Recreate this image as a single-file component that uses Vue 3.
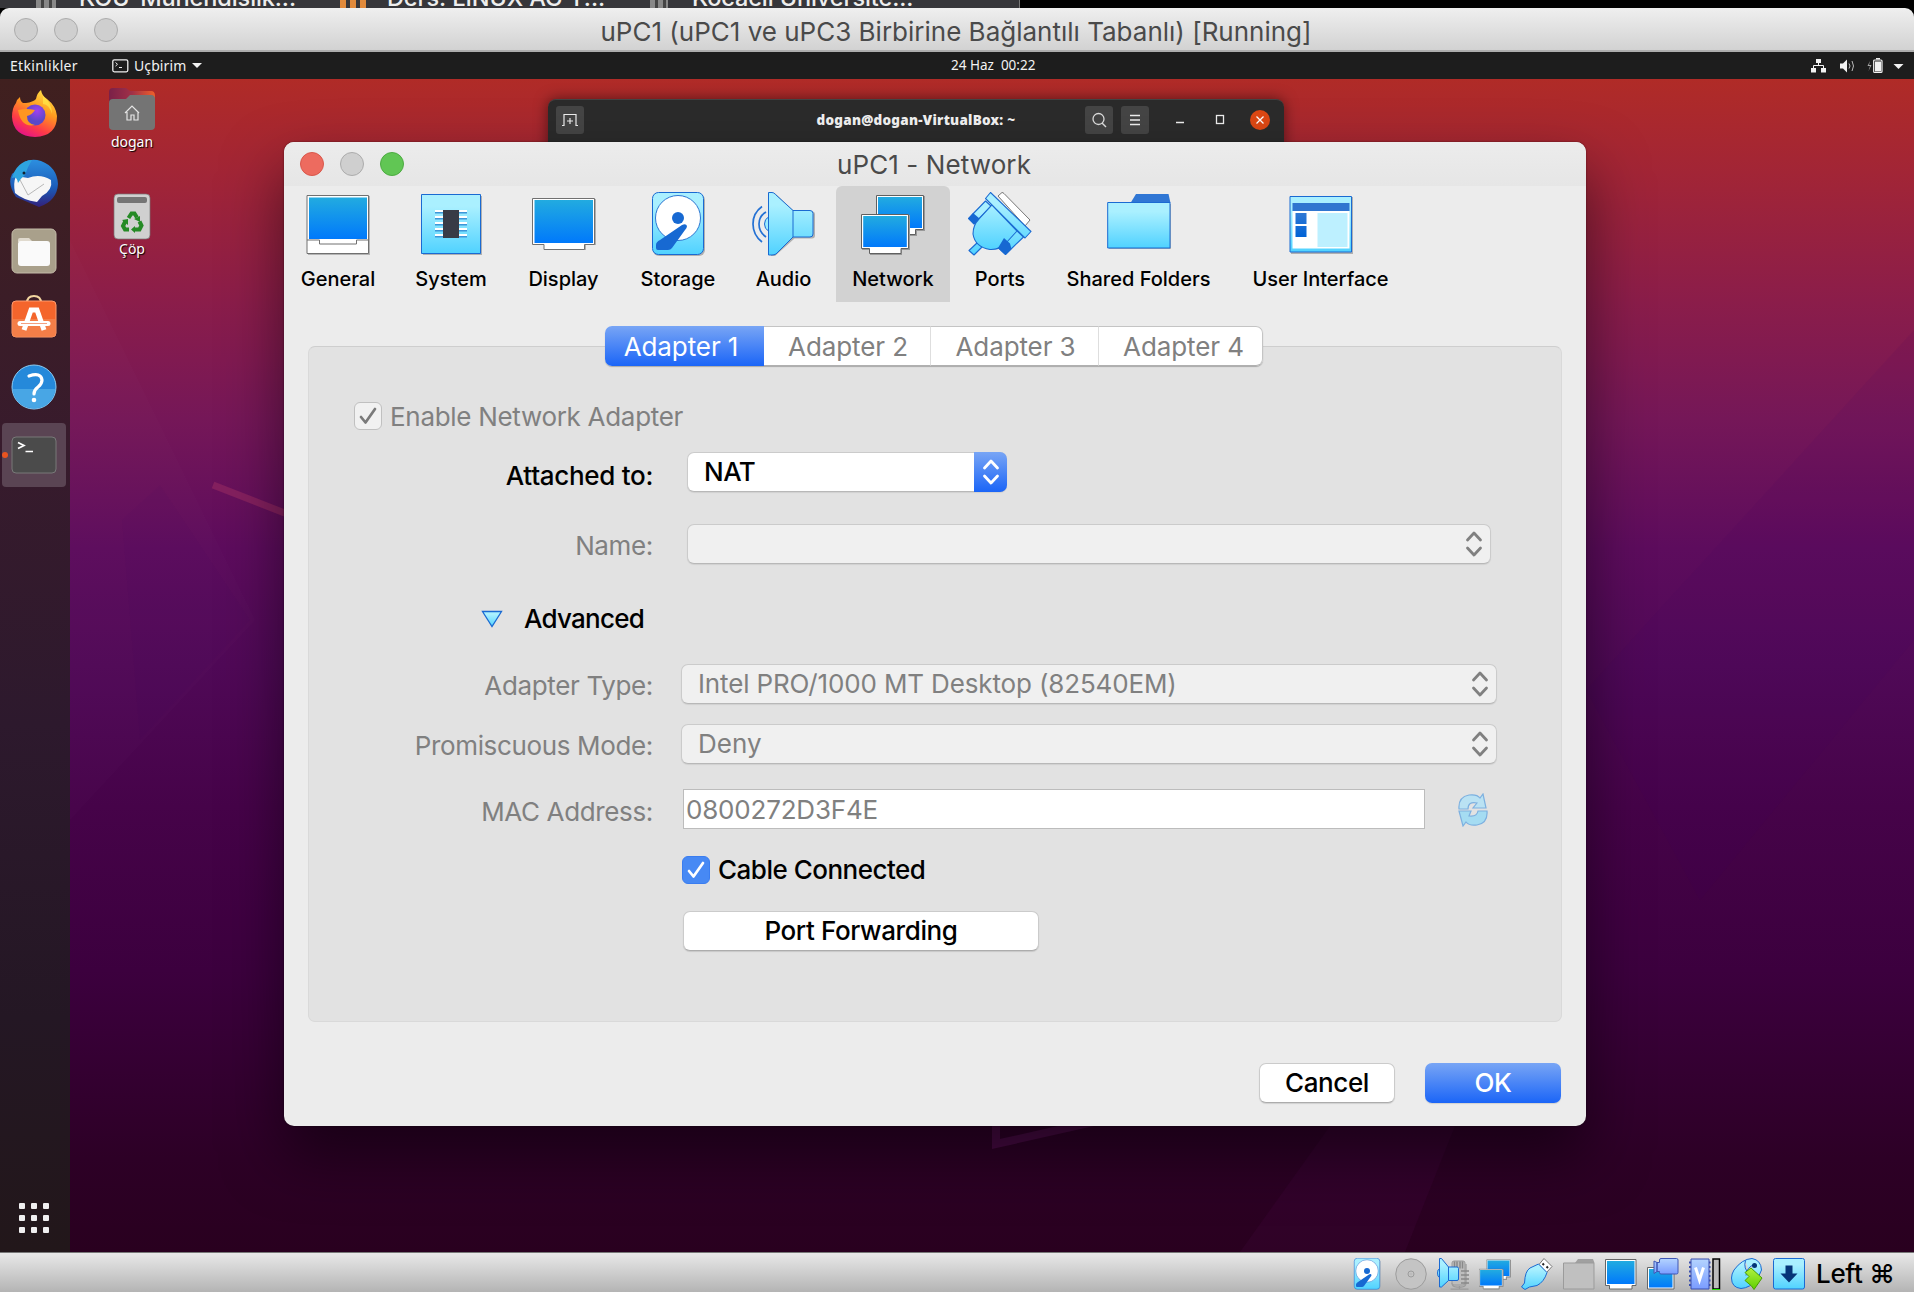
<script setup>
const tools = [
  { id: 'general', label: 'General', w: 108 },
  { id: 'system', label: 'System', w: 102 },
  { id: 'display', label: 'Display', w: 107 },
  { id: 'storage', label: 'Storage', w: 106 },
  { id: 'audio', label: 'Audio', w: 89 },
  { id: 'network', label: 'Network', w: 114 },
  { id: 'ports', label: 'Ports', w: 84 },
  { id: 'folder', label: 'Shared Folders', w: 177 },
  { id: 'ui', label: 'User Interface', w: 171 },
]
const tabs = ['Adapter 1', 'Adapter 2', 'Adapter 3', 'Adapter 4']
const status = ['storage', 'cd', 'audiomic', 'network', 'usb', 'folder-off', 'screen', 'record', 'cpu', 'mouse', 'arrow']
</script>

<template>
  <div class="screen">
    <svg class="defs" width="0" height="0" aria-hidden="true">
      <defs>
        <linearGradient id="cy" x2="0" y2="1"><stop offset=".2" stop-color="#aaf0ff" /><stop offset="1" stop-color="#50d2ff" /></linearGradient>
        <linearGradient id="bl" x2="0" y2="1"><stop stop-color="#22abe0" /><stop offset="1" stop-color="#0079fb" /></linearGradient>
        <linearGradient id="dk" x2="0" y2="1"><stop stop-color="#2f78d4" /><stop offset="1" stop-color="#0062d6" /></linearGradient>
        <linearGradient id="vi" x2="0" y2="1"><stop stop-color="#b4d4ff" /><stop offset="1" stop-color="#7a9cff" /></linearGradient>
        <linearGradient id="gn" x2="0" y2="1"><stop stop-color="#b0f040" /><stop offset="1" stop-color="#5fd000" /></linearGradient>
        <linearGradient id="ff" x1=".8" y1="0" x2=".3" y2="1"><stop stop-color="#ffe84a" /><stop offset=".4" stop-color="#ff9a1f" /><stop offset=".75" stop-color="#ff3b47" /><stop offset="1" stop-color="#e3128a" /></linearGradient>
        <radialGradient id="fp" cx=".6" cy=".3"><stop stop-color="#a040f0" /><stop offset="1" stop-color="#5b48c8" /></radialGradient>
        <linearGradient id="tb" x2="0" y2="1"><stop stop-color="#2c8fe0" /><stop offset=".6" stop-color="#1b5bb8" /><stop offset="1" stop-color="#33207a" /></linearGradient>
        <linearGradient id="fo" x2="1" y2="0"><stop stop-color="#7a2048" /><stop offset=".5" stop-color="#a03048" /><stop offset="1" stop-color="#f0602a" /></linearGradient>
      </defs>
      <symbol id="general" viewBox="0 0 64 64">
        <path d="M2 4h62v59H2z" fill="#b4b4b4" /><path d="M1 3.500h61.500v58H1z" fill="#fff" stroke="#707070" />
        <path d="M3 5.500h58v41.500H3z" fill="url(#bl)" /><path d="M1 48h12.500v4h37v-4H62" fill="none" stroke="#707070" />
      </symbol>
      <symbol id="system" viewBox="0 0 64 64">
        <path d="M4 4h59v59H4z" fill="#b0b0b0" /><path d="M2.500 2.500h59v59h-59z" fill="url(#cy)" stroke="#1a6ad2" />
        <g fill="#3d96d8"><path d="M16 20h32v1.500H16zM16 26h32v1.500H16zM16 32h32v1.500H16zM16 38h32v1.500H16zM16 44h32v1.500H16z" /></g>
        <path d="M16 18h32v2H16zM16 24h32v2H16zM16 30h32v2H16zM16 36h32v2H16zM16 42h32v2H16z" fill="#fff" /><path d="M24 18h16v28H24z" fill="#383b46" />
      </symbol>
      <symbol id="display" viewBox="0 0 64 64">
        <path d="M1 7h63v46H54v5H14v-5H1z" fill="#b0b0b0" /><path d="M.5 6.500h62V52.500h-10v5H12v-5H.5z" fill="#fff" stroke="#707070" /><path d="M2.500 8h58.500v43H2.500z" fill="url(#bl)" />
      </symbol>
      <symbol id="storage" viewBox="0 0 64 64">
        <rect x="7" y="2" width="52" height="62" rx="6" fill="#b0b0b0" /><rect x="6.500" y=".5" width="51" height="62" rx="6" fill="url(#cy)" stroke="#1a6ad2" />
        <circle cx="32" cy="26" r="22.500" fill="#fff" stroke="#2e78d2" /><circle cx="32" cy="26" r="6" fill="#1769d2" />
        <path d="M10 53q0-3 4-5L36 33q4-2 5 1q0 2-2 4L26 56q-1.500 2-4 2H12q-2 0-2-2z" fill="#1769d2" />
      </symbol>
      <symbol id="cone" viewBox="0 0 64 64">
        <path d="M18 .8l4 0 L41.500 19H59q3 0 3 3V43q0 3-3 3H41.500L22 63.500h-4z" transform="translate(1 .5)" fill="#b0b0b0" />
        <path d="M16.500 .5H20q2 0 3.500 2L41 18.500H58q3 0 3 3V42q0 3-3 3H41L24 62q-2 1-4 1h-3.500zM41 18.500V45" fill="url(#cy)" stroke="#1a6ad2" />
      </symbol>
      <symbol id="audio" viewBox="0 0 64 64">
        <use href="#cone" /><path d="M16.500 25q-4 2-4 7t4 7z" fill="#9cecff" stroke="#1a6ad2" />
        <path d="M14 20Q7 24 7 32t7 13M10 14.500Q1 21 1 32t9 18" fill="none" stroke="#2371d4" stroke-width="1.700" />
      </symbol>
      <symbol id="network" viewBox="0 0 64 64">
        <path d="M16 4h48v35h-8v5H16z" fill="#999" /><path d="M15.500 3.500h47V37.500h-8v5h-39z" fill="#fff" stroke="#606060" /><path d="M17 5h44v31H17z" fill="url(#bl)" />
        <path d="M1 23h48v35h-8v5H9v-5H1z" fill="#999" /><path d="M.5 22.500h47V56.500H40v5H8.500v-5h-8z" fill="#fff" stroke="#606060" /><path d="M2.200 24h43.600v31H2.200z" fill="url(#bl)" />
      </symbol>
      <symbol id="ports" viewBox="0 0 64 64">
        <path d="M30 4l4-3.500q1 0 2 1L62 28l-5 6z" fill="#fff" stroke="#777" />
        <g fill="url(#cy)" stroke="#1a6ad2" stroke-width="1.100" stroke-linejoin="round">
          <path d="M17.500 9L.5 26.500l5.500 5.500L23 14zM55.500 45L37.500 62.500l-7-6.500L48 38zM9.500 50.500L1 58.500l5 4.500L14 55z" />
          <path d="M24 13L49 39 38 51Q31 58 22 57.500 7 55 5 42 5 33 11 27zM22.500 .5l-5 6L57 46l6-6.500z" />
        </g>
        <path d="M5 21L.5 26.500l5.500 5.500 5.500-5.500zM42 51.500l-6-5.500-6 10 7.500 7 6-6z" fill="#1668d2" />
      </symbol>
      <symbol id="folder" viewBox="0 0 64 64">
        <path d="M23.500 11L29 2h32.500L63.500 11z" fill="#2f76d4" /><path d="M2 12h62v45H2z" fill="#b0b0b0" /><path d="M.7 10.500h62.300V56H.7z" fill="url(#cy)" stroke="#1a6ad2" />
      </symbol>
      <symbol id="ui" viewBox="0 0 64 64">
        <path d="M2 5h62v57H2z" fill="#b0b0b0" /><path d="M1 4.500h61.500v55.500H1z" fill="url(#cy)" stroke="#1a6ad2" /><path d="M3.500 19h57v37.500h-57z" fill="#fff" />
        <path d="M3.500 11h57v8h-57z" fill="#3076d0" /><path d="M6.500 21h11v11h-11zM6.500 34h11v11h-11z" fill="url(#dk)" /><path d="M28.500 21h30v34h-30z" fill="#bdf0ff" />
      </symbol>
      <symbol id="cd" viewBox="0 0 64 64"><g fill="#c4c4c4" stroke="#9c9c9c" stroke-width="2"><circle cx="32" cy="32" r="30.500" /><circle cx="32" cy="32" r="6" /></g><circle cx="32" cy="32" r="2.500" fill="#bbb" /></symbol>
      <symbol id="audiomic" viewBox="0 0 64 64">
        <g fill="none" stroke="#9a9a9a" stroke-width="2.500"><path d="M30 50q0 8 10 8h8q10 0 10-8V12M27 62h36M45 56v6" /></g>
        <rect x="30" y="6" width="26" height="48" rx="4" fill="#bdbdbd" stroke="#999" stroke-width="2" /><path d="M35 7v14M40 7v14M46 7v14M51 7v14M48 26h16M48 34h16M48 42h16M48 50h16" stroke="#888" stroke-width="3" />
        <path d="M5 1h4l14 17h17q3 0 3 3v21q0 3-3 3H23L9 58H5zM23 18v27M5 22q-4 0-4 8t4 9" fill="url(#cy)" stroke="#1a6ad2" stroke-width="2" />
      </symbol>
      <symbol id="usb" viewBox="0 0 64 64">
        <path d="M46 1L62 17 51 29 36 13z" fill="#fff" stroke="#777" stroke-width="2" /><path d="M43 11l3 3M51 17l3 3" stroke="#222" stroke-width="4" />
        <path d="M35 12L52 29Q46 48 32 55L17 58 8 63 1 58 7 50Q8 26 18 20z" fill="url(#cy)" stroke="#1a6ad2" stroke-width="2" />
      </symbol>
      <symbol id="folder-off" viewBox="0 0 64 64"><path d="M24 10l6-8h30l3 8z" fill="#a0a0a0" /><path d="M1 10h61v52H1z" fill="#c0c0c0" stroke="#9b9b9b" stroke-width="2" /></symbol>
      <symbol id="screen" viewBox="0 0 64 64"><path d="M1 3h61v52h-8v7H9v-7H1z" fill="#fff" stroke="#666" stroke-width="2" /><path d="M4 6h55v46H4z" fill="url(#bl)" /></symbol>
      <symbol id="record" viewBox="0 0 64 64"><path d="M1 19h53v43H1z" fill="#fff" stroke="#666" stroke-width="2" /><path d="M4 22h47v37H4z" fill="url(#bl)" /><path d="M14 6l6 3v18l-6 4zM20 9h5V4q0-3 3-3h31q3 0 3 3v25q0 3-3 3H28q-3 0-3-3v-2h-5z" fill="url(#vi)" stroke="#3f57b4" stroke-width="2" /></symbol>
      <symbol id="cpu" viewBox="0 0 64 64">
        <path d="M0 9h43M0 18h43M0 27h43M0 36h43M0 45h43M0 54h43" stroke="#3a4fae" stroke-width="4" /><path d="M4 2h36v60H4z" fill="url(#vi)" stroke="#3a4fae" stroke-width="2" />
        <path d="M13 19L21 44 29 19" fill="none" stroke="#fff" stroke-width="6" /><path d="M48 2h13v60H48z" fill="#bbb" stroke="#000" stroke-width="3" /><path d="M46 62h16v2H46z" fill="#1fe000" />
      </symbol>
      <symbol id="mouse" viewBox="0 0 64 64"><path d="M6 24Q22 2 42 1 60 4 61 24L53 42Q38 60 20 61 1 59 1 40 1 32 6 24zM29 5q-5 16 8 27M47 13q-16 5-17 22" fill="url(#cy)" stroke="#1a6ad2" stroke-width="2" /><circle cx="47" cy="15" r="5" fill="#033477" /><path d="M40 20L62 40 46 63 41 56 28 45 36 37 28 29z" fill="url(#gn)" stroke="#499f00" stroke-width="2" /></symbol>
      <symbol id="arrow" viewBox="0 0 64 64"><rect x="1" y="1" width="62" height="61" rx="4" fill="url(#cy)" stroke="#1a6ad2" stroke-width="2" /><path d="M25 15h14v16h10L32 49 15 31h10z" fill="#063478" /></symbol>
    </svg>

    <div class="strip">
      <div class="strip-dark">
        <span class="sq g" /><b class="s1">KOÜ-Mühendislik...</b>
        <span class="sq o" /><b class="s2">Ders: LİNUX AG Y...</b>
        <span class="sq g" /><b class="s3">Kocaeli Üniversite...</b><b class="s4">»</b>
      </div>
    </div>
    <header class="vmbar">
      <span class="lights"><i /><i /><i /></span>
      <span class="vmtitle">uPC1 (uPC1 ve uPC3 Birbirine Bağlantılı Tabanlı) [Running]</span>
    </header>
    <div class="gnome">
      <span class="act">Etkinlikler</span>
      <svg class="ticon" width="17" height="14" viewBox="0 0 17 14"><rect x=".8" y=".8" width="15" height="12" rx="1.500" fill="none" stroke="#eee" stroke-width="1.300" /><path d="M3.500 3.500l2 1.800-2 1.800M7 8.500h3" fill="none" stroke="#eee" /></svg>
      <span class="app">Uçbirim</span><span class="caret" />
      <span class="clock">24 Haz&nbsp; 00:22</span>
      <svg class="tray" width="94" height="16" viewBox="0 0 94 16">
        <g fill="#f2f2f2"><path d="M5 1h5v4H5zM0 10h5v4.500H0zM10 10h5v4.500h-5z" /><path d="M2.500 10V7.500h10V10M7.500 5v2.500" fill="none" stroke="#f2f2f2" />
          <path d="M29 5.500h3l4-4v13l-4-4h-3z" /><path d="M38 5.500q2 2.500 0 5M41 3q3 5 0 10" fill="none" stroke="#bbb" /><path d="M59 3l-2.500 5H59l-1.500 5 3-6H58z" fill="#aaa" /><path d="M65 0h4v1.500h-4zM64 3.500h6v10h-6z" /><rect x="62.700" y="2" width="8.300" height="12.500" rx="1" fill="none" stroke="#f2f2f2" stroke-width="1.200" /><path d="M82.500 6h10l-5 5z" /></g>
      </svg>
    </div>

    <main class="desktop">
      <svg class="wall" viewBox="0 79 1914 1173" preserveAspectRatio="none">
        <path d="M70 240L255 620 70 820z" fill="#fff" opacity=".012" /><path d="M122 520L160 485 250 620 140 740z" fill="#30006a" opacity=".04" />
        <path d="M1586 690L1914 330V640L1700 900z" fill="#40006a" opacity=".08" /><path d="M1240 1252L1330 1126h125l-50 126z" fill="#70106a" opacity=".1" />
        <path d="M213 485L300 519" stroke="#84205f" stroke-width="7" /><path d="M996 1115v29l115-26" fill="none" stroke="#480a44" stroke-width="8" />
      </svg>
      <aside class="dock">
        <svg class="d ff" width="48" height="48" viewBox="0 0 48 48"><path d="M6 13q1-4 4-6 0 4 3 6h3q7-1 10-4 1-6 5-9 1 6 6 9 9 7 10 17 0 20-22 21Q3 46 2 27 2 18 6 13z" fill="url(#ff)" /><circle cx="25" cy="25" r="10.500" fill="url(#fp)" /><path d="M8 20q8-2 17 0-3 5-8 6 0 8 8 9-14 3-17-15z" fill="#ff9620" /><path d="M33 6q9 7 9 18-3-10-9-10z" fill="#fff04d" opacity=".6" /></svg>
        <svg class="d tb" width="50" height="50" viewBox="0 0 50 50"><path d="M15 4Q23 0 32 3 48 9 49 26 48 43 30 49L7 39Q-2 26 3 16q4-4 8-5z" fill="url(#tb)" /><path d="M19 20q12-5 23 2 2 10-9 16l-5 6Q14 42 6 35 4 25 7 18z" fill="#f6f6f6" /><path d="M10 20l9 17L35 26" fill="none" stroke="#b8b8b8" /><path d="M3 20Q8 3 23 2q-4 6-7 15-4 3-7 8-1-7-6-5z" fill="#2ea4df" /><circle cx="15" cy="15" r="1.500" fill="#123" /></svg>
        <svg class="d fi" width="46" height="46" viewBox="0 0 46 46"><rect x="1" y="1" width="44" height="44" rx="5" fill="#a9a08b" stroke="#c3bba8" /><path d="M7 12q0-2 2-2h9l4 4h-15z" fill="#e0dace" /><rect x="7" y="13" width="32" height="25" rx="3" fill="#fafafa" /></svg>
        <svg class="d so" width="46" height="44" viewBox="0 0 46 44"><path d="M16 9q0-7 7-7t7 7" fill="none" stroke="#f3d6a0" stroke-width="2" /><rect x="1" y="7" width="44" height="36" rx="4" fill="#f4652c" stroke="#ff9c6e" /><path d="M1 25h44v14q0 4-4 4H5q-4 0-4-4z" fill="#f48450" opacity=".8" /><path d="M13 36l7-20h6l7 20" fill="none" stroke="#fff" stroke-width="5" /><path d="M9 29.500h28" stroke="#fff" stroke-width="5" stroke-linecap="round" /><path d="M10 29.500h26" stroke="#f3a080" /></svg>
        <svg class="d he" width="46" height="46" viewBox="0 0 46 46"><circle cx="23" cy="23" r="22" fill="#2589da" stroke="#8ccdf4" /><path d="M1.500 25h43Q41 44 23 44.500 4 43 1.500 25z" fill="#48a6e5" /><path d="M18 12q12-4 13 4 0 4-4 7-4 3-4 7" fill="none" stroke="#fff" stroke-width="3.200" stroke-linecap="round" /><circle cx="23" cy="36" r="2.300" fill="#fff" /></svg>
        <div class="active"><i /><svg width="46" height="38" viewBox="0 0 46 38"><rect x="1" y="1" width="44" height="36" rx="4" fill="#4b4b4b" stroke="#787878" /><path d="M7 6.500l6 3-6 3M14.500 15.500h7.500" fill="none" stroke="#fff" stroke-width="1.700" /></svg></div>
        <div class="apps"><i v-for="n in 9" :key="n" /></div>
      </aside>
      <div class="shortcuts">
        <svg width="46" height="43" viewBox="0 0 46 43"><path d="M0 8V4q0-4 4-4h13l4 3h21q4 0 4 5v12H0z" fill="url(#fo)" /><path d="M0 15q0-4 4-4h13l4-4h21q4 0 4 4v27q0 4-4 4H4q-4 0-4-4z" fill="#747474" /><path d="M16 25l7-7 7 7M18 24v8h4v-5h3v5h4v-8" fill="none" stroke="#e5e5e5" stroke-width="1.200" /></svg>
        <span>dogan</span>
        <svg class="bin" width="38" height="47" viewBox="0 0 38 47"><rect x="1" y="1" width="36" height="45" rx="4" fill="#d0d0d0" stroke="#777" stroke-width=".7" /><rect x="4" y="4" width="30" height="6" rx="2" fill="#757575" /><g fill="none" stroke="#258a25" stroke-width="4"><path d="M15.500 25l3-4.500h3l2.500 4M26.500 28.500l2 4-2 4h-4.500M16 36.500h-4l-2-3.500 2.500-5" /></g><path d="M21 26l6-3v6zM22 33v7l-4-3.500zM9 27l6-1 0 6z" fill="#258a25" /></svg>
        <span>Çöp</span>
      </div>
      <section class="term">
        <span class="tbtn"><svg width="16" height="16" viewBox="0 0 16 16"><path d="M0 13.500h2V2.500h12v11h2M8 6v6M5 9h6" fill="none" stroke="#eee" stroke-width="1.200" /></svg></span>
        <b>dogan@dogan-VirtualBox: ~</b>
        <span class="tbtn s"><svg width="16" height="16" viewBox="0 0 16 16"><circle cx="7.500" cy="7" r="5.500" fill="none" stroke="#ddd" stroke-width="1.300" /><path d="M11 11l4 4" stroke="#ddd" stroke-width="1.500" /></svg></span>
        <span class="tbtn"><svg width="16" height="16" viewBox="0 0 16 16"><path d="M3 3.500h10M3 8h10M3 12.500h10" stroke="#eee" stroke-width="1.300" /></svg></span>
        <svg class="wc" width="100" height="22" viewBox="0 0 100 22"><path d="M5 13.500h8" stroke="#eee" stroke-width="1.500" /><rect x="45.500" y="6.500" width="7" height="8" fill="none" stroke="#eee" stroke-width="1.300" /><circle cx="89" cy="11" r="10" fill="#dd4814" /><path d="M85.500 7.500l7 7m0-7l-7 7" stroke="#fff" stroke-width="1.300" /></svg>
      </section>

      <section class="dialog">
        <header class="dtitle"><span class="lights"><i class="r" /><i /><i class="gr" /></span><span class="dname">uPC1 - Network</span></header>
        <nav class="toolbar">
          <div v-for="t in tools" :key="t.id" class="tool" :class="{ on: t.id === 'network' }" :style="{ width: t.w + 'px' }">
            <svg width="64" height="64"><use :href="'#' + t.id" /></svg><span>{{ t.label }}</span>
          </div>
        </nav>
        <div class="panel">
          <div class="tabs"><span v-for="(t, i) in tabs" :key="t" :class="{ sel: i === 0 }">{{ t }}</span></div>
          <div class="enable"><span class="cb off"><svg width="28" height="28" viewBox="0 0 28 28"><path d="M7 15l4.500 5.500L21 7" /></svg></span><span class="cap">Enable Network Adapter</span></div>
          <div class="row attached"><label>Attached to:</label><div class="select live"><span>NAT</span><i><svg width="20" height="28" viewBox="0 0 20 28"><path d="M3.500 10L10 3l6.500 7M3.500 18l6.500 7 6.500-7" /></svg></i></div></div>
          <div class="row name"><label class="dim">Name:</label><div class="select"><svg width="20" height="28" viewBox="0 0 20 28"><path d="M3.500 10L10 3l6.500 7M3.500 18l6.500 7 6.500-7" /></svg></div></div>
          <div class="adv"><svg width="22" height="18" viewBox="0 0 22 18"><path d="M1.500 1.500h19L11 16.500z" fill="url(#cy)" stroke="#1a6ad2" stroke-width="1.300" /></svg><span>Advanced</span></div>
          <div class="row type"><label class="dim">Adapter Type:</label><div class="select"><span class="long">Intel PRO/1000 MT Desktop (82540EM)</span><svg width="20" height="28" viewBox="0 0 20 28"><path d="M3.500 10L10 3l6.500 7M3.500 18l6.500 7 6.500-7" /></svg></div></div>
          <div class="row prom"><label class="dim">Promiscuous Mode:</label><div class="select"><span>Deny</span><svg width="20" height="28" viewBox="0 0 20 28"><path d="M3.500 10L10 3l6.500 7M3.500 18l6.500 7 6.500-7" /></svg></div></div>
          <div class="row mac"><label class="dim">MAC Address:</label><div class="input">0800272D3F4E</div>
            <svg class="refresh" width="30" height="34" viewBox="0 0 30 34"><g fill="#b8e3f4" stroke="#78aee0" stroke-width="1.200"><path d="M1 16Q0 4 11 2q8-1 11 3l3-4 3 14H15l4-5Q10 8 10 16z" /><path d="M29 18Q30 30 19 32q-8 1-11-3l-3 4L1 18h12l-2 5q8 1 9-5z" fill="#a2dcf3" /></g></svg></div>
          <div class="enable cable"><span class="cb blue"><svg width="28" height="28" viewBox="0 0 28 28"><path d="M7 15l4.500 5.500L21 7" /></svg></span><span>Cable Connected</span></div>
          <div class="btn pf">Port Forwarding</div>
        </div>
        <footer><div class="btn">Cancel</div><div class="btn ok">OK</div></footer>
      </section>
    </main>
    <footer class="status"><svg v-for="s in status" :key="s" width="32" height="32"><use :href="'#' + s" /></svg><span>Left ⌘</span></footer>
  </div>
</template>

<style>
body { margin: 0; overflow: hidden; }
</style>
<style scoped>
* { box-sizing: border-box; }
.screen { width: 1914px; height: 1292px; display: flex; flex-direction: column; overflow: hidden; background: #000; font: 26px/30px Inter, sans-serif; color: #000; white-space: nowrap; }
.screen svg { flex: none; display: block; }
.defs { position: absolute; }
.strip { height: 8px; flex: none; overflow: hidden; }
.strip-dark { width: 1020px; height: 8px; background: #36363a; border-right: 1px solid #777; display: flex; align-items: flex-end; font-size: 23.500px; line-height: 24px; color: #eee; }
.strip-dark b { font-weight: 500; height: 22px; letter-spacing: -.1px; }
.strip-dark .s4 { height: 26px; }
.sq { width: 20px; height: 8px; margin-left: 36px; background: repeating-linear-gradient(90deg, #888 0 5px, #444 5px 8px); }
.sq.o { width: 30px; background: repeating-linear-gradient(90deg, #e08a3c 0 6px, #36363a 6px 10px); margin-left: 0; }
.sq.o + b { margin-left: 17px; }
.s1 { margin-left: 23px; width: 261px; }
.s2 { width: 263px; }
.s2 + .sq { margin-left: 0; width: 18px; }
.s3 { margin-left: 24px; width: 272px; }
.vmbar { height: 44px; flex: none; display: grid; grid-template-columns: 120px 1672px; align-items: center; background: linear-gradient(#efefef, #d2d2d2); border-bottom: 2px solid #adadad; border-radius: 9px 9px 0 0; color: #4a4a4a; }
.vmtitle { text-align: center; line-height: 44px; padding-top: 2px; height: 44px; }
.lights { display: flex; gap: 16px; padding-left: 14px; }
.lights i { width: 24px; height: 24px; border-radius: 50%; background: #cfcfcf; border: 1px solid #acacac; }
.lights .r { background: #ed6b5f; border-color: #d9574b; }
.lights .gr { background: #61c654; border-color: #4dab41; }
.gnome { height: 27px; flex: none; background: #1d1d1d; color: #f2f2f2; display: flex; align-items: center; font: 14px/27px "Noto Sans", sans-serif; padding-left: 10px; }
.act { width: 102px; letter-spacing: .3px; }
.app { margin-left: 5px; width: 58px; letter-spacing: .1px; }
.caret { border: 5px solid transparent; border-top-color: #f2f2f2; border-bottom: 0; }
.clock { margin-left: 749px; width: 86px; font-size: 13.500px; }
.tray { margin-left: 774px; }
.desktop { height: 1173px; flex: none; position: relative; background: linear-gradient(#b02b27 0, #a22536 8%, #8b1d4a 19%, #751758 29%, #5d0c5d 40%, #500957 50%, #460349 62%, #3c003e 76%, #2d0026 92%, #29001f); }
.wall { position: absolute; inset: 0; width: 1914px; height: 1173px; }
.dock { position: relative; width: 70px; height: 1173px; display: flex; flex-direction: column; align-items: center; background: linear-gradient(#40201f, #381b2c 30%, #2d192d 55%, #241724 80%, #22171a); padding-top: 11px; padding-right: 2px; }
.tb { margin-top: 20px; } .fi { margin-top: 20px; } .so { margin-top: 20px; } .he { margin-top: 26px; }
.active { width: 64px; height: 64px; margin-top: 13px; border-radius: 4px; background: #5a4453; display: flex; align-items: center; justify-content: center; position: relative; }
.active i { position: absolute; left: 0; top: 29px; width: 6px; height: 6px; border-radius: 50%; background: #e95420; }
.apps { margin-top: auto; margin-bottom: 19px; display: grid; grid-template-columns: repeat(3, 6px); gap: 6px; }
.apps i { width: 6px; height: 6px; border-radius: 1px; background: #f0eff0; }
.shortcuts { position: absolute; left: 92px; top: 9px; width: 80px; display: flex; flex-direction: column; align-items: center; font: 14px/22px "Noto Sans", sans-serif; color: #fff; text-shadow: 1px 1px 1px #000; }
.bin { margin-top: 40px; margin-bottom: -2px; }
.term { position: absolute; left: 548px; top: 20px; width: 736px; height: 60px; background: #2b2b2b; border-radius: 8px 8px 0 0; border-top: 1px solid #444; display: flex; align-items: flex-start; padding: 6px 13px 0 8px; color: #f2f2f2; font: bold 13.500px/28px "Noto Sans", sans-serif; box-shadow: 0 0 14px rgba(0,0,0,.5); }
.tbtn { width: 28px; height: 28px; border-radius: 3px; background: #454545; display: flex; align-items: center; justify-content: center; margin-right: 8px; }
.term b { width: 493px; text-align: center; padding-left: 155px; letter-spacing: .25px; }
.wc { margin: 3px 0 0 14px; }
.dialog { position: absolute; left: 284px; top: 63px; width: 1302px; height: 984px; background: #ececec; border-radius: 10px; display: flex; flex-direction: column; box-shadow: 0 28px 60px rgba(0,0,0,.5), 0 0 2px rgba(0,0,0,.5); }
.dtitle { height: 44px; flex: none; display: grid; grid-template-columns: 120px 1060px; align-items: center; text-align: center; color: #4a4a4a; background: linear-gradient(#ececec, #e6e6e6); border-radius: 10px 10px 0 0; }
.dtitle .lights { padding-left: 16px; }
.dname { padding-top: 2px; letter-spacing: .1px; }
.toolbar { display: flex; gap: 8px; height: 116px; flex: none; }
.tool { display: flex; flex-direction: column; align-items: center; padding-top: 6px; font-size: 20px; font-weight: 500; line-height: 24px; border-radius: 6px 6px 0 0; }
.tool.on { background: #d2d2d2; }
.tool span { margin-top: 11px; }
.panel { margin: 44px 24px 0; height: 676px; flex: none; border: 1px solid #d9d9d9; border-top-color: #cecece; border-radius: 7px; background: #e2e2e2; display: flex; flex-direction: column; }
.tabs { width: 658px; height: 40px; margin: -21px 0 0 296px; display: grid; grid-template-columns: 159px 167px 168px 164px; border-radius: 7px; color: #808080; box-shadow: 0 1px 1px rgba(0,0,0,.25); background: #fff; letter-spacing: -.1px; flex: none; }
.tabs span { text-align: center; border-right: 1px solid #dedede; border-top: 1px solid #c4c4c4; border-bottom: 1px solid #b0b0b0; line-height: 39px; height: 40px; padding-left: 2px; }
.tabs span:last-child { border-right-color: #c4c4c4; border-radius: 0 7px 7px 0; padding-left: 6px; }
.tabs .sel { background: linear-gradient(#78a5f5, #1b65f7); color: #fff; border: 0; border-radius: 7px 0 0 7px; padding: 0 7px 0 0; line-height: 41px; }
.enable { display: flex; align-items: center; gap: 8px; margin: 36px 0 0 45px; height: 28px; color: #808080; flex: none; }
.cap { letter-spacing: -.3px; padding-top: 1px; }
.cb { width: 28px; height: 28px; border-radius: 6px; background: #f1f1f1; border: 1px solid #c0c0c0; }
.cb svg { margin: -1px; fill: none; stroke: #7a7a7a; stroke-width: 2.700; stroke-linecap: round; stroke-linejoin: round; }
.cb.blue { background: #4789f4; border-color: #3a7df0; }
.cb.blue svg { stroke: #fff; }
.row { display: flex; height: 40px; flex: none; }
.row label { width: 344px; text-align: right; line-height: 48px; font-weight: 500; letter-spacing: -.3px; }
.row .dim { color: #808080; font-weight: 400; letter-spacing: -.35px; }
.row.attached { margin-top: 22px; } .row.name { margin-top: 32px; } .row.type { margin-top: 30px; } .row.prom { margin-top: 20px; } .row.mac { margin-top: 25px; }
.row.name label, .row.type label, .row.prom label { line-height: 43px; }
.row.mac label { line-height: 45px; }
.select { margin-left: 34px; width: 804px; height: 40px; border: 1px solid #cbcbcb; border-bottom-color: #b8b8b8; border-radius: 7px; background: #f0f0f0; color: #808080; display: flex; align-items: center; justify-content: flex-end; padding-right: 6px; box-shadow: 0 1px 1px rgba(0,0,0,.08); }
.select span { margin-right: auto; padding-left: 16px; line-height: 38px; }
.long { letter-spacing: -.14px; }
.select svg { fill: none; stroke: #808080; stroke-width: 2.800; stroke-linecap: round; stroke-linejoin: round; }
.type .select, .prom .select { margin-left: 28px; width: 816px; }
.select.live { width: 320px; padding-right: 0; background: #fff; color: #000; }
.live span { letter-spacing: -.5px; font-weight: 500; }
.live i { width: 33px; height: 40px; margin: -1px; flex: none; background: linear-gradient(#78a5f5, #1b65f7); border-radius: 0 7px 7px 0; display: flex; align-items: center; justify-content: center; }
.live svg { stroke: #fff; }
.adv { display: flex; align-items: center; height: 30px; margin: 40px 0 0 172px; flex: none; font-weight: 500; gap: 21px; letter-spacing: -.75px; }
.input { margin-left: 30px; width: 742px; height: 40px; border: 1px solid #bcbcbc; background: #fff; color: #808080; padding-left: 2px; line-height: 39px; letter-spacing: -.2px; }
.refresh { margin: 4px 0 0 33px; opacity: .95; }
.cable { margin: 27px 0 0 373px; color: #000; font-weight: 500; letter-spacing: -.5px; }
.btn { border-radius: 7px; background: #fff; border: 1px solid #cbcbcb; border-bottom-color: #acacac; height: 40px; width: 136px; text-align: center; line-height: 38px; font-weight: 500; letter-spacing: -.4px; box-shadow: 0 1px 1px rgba(0,0,0,.12); flex: none; }
.pf { width: 356px; margin: 27px 0 0 374px; }
.dialog footer { display: flex; justify-content: flex-end; gap: 30px; padding: 41px 25px 0 0; }
.btn.ok { background: linear-gradient(#78a5f5, #1b65f7); border: 0; line-height: 40px; color: #fff; }
.status { height: 40px; flex: none; display: flex; gap: 10px; align-items: center; padding: 2px 0 0 1351px; background: linear-gradient(#e8e8e8, #b4b4b4); border-top: 1px solid #777; }
.status svg:first-child { margin-right: 2px; }
.status span { margin-left: 1px; font-weight: 500; line-height: 36px; letter-spacing: -.3px; }
</style>
